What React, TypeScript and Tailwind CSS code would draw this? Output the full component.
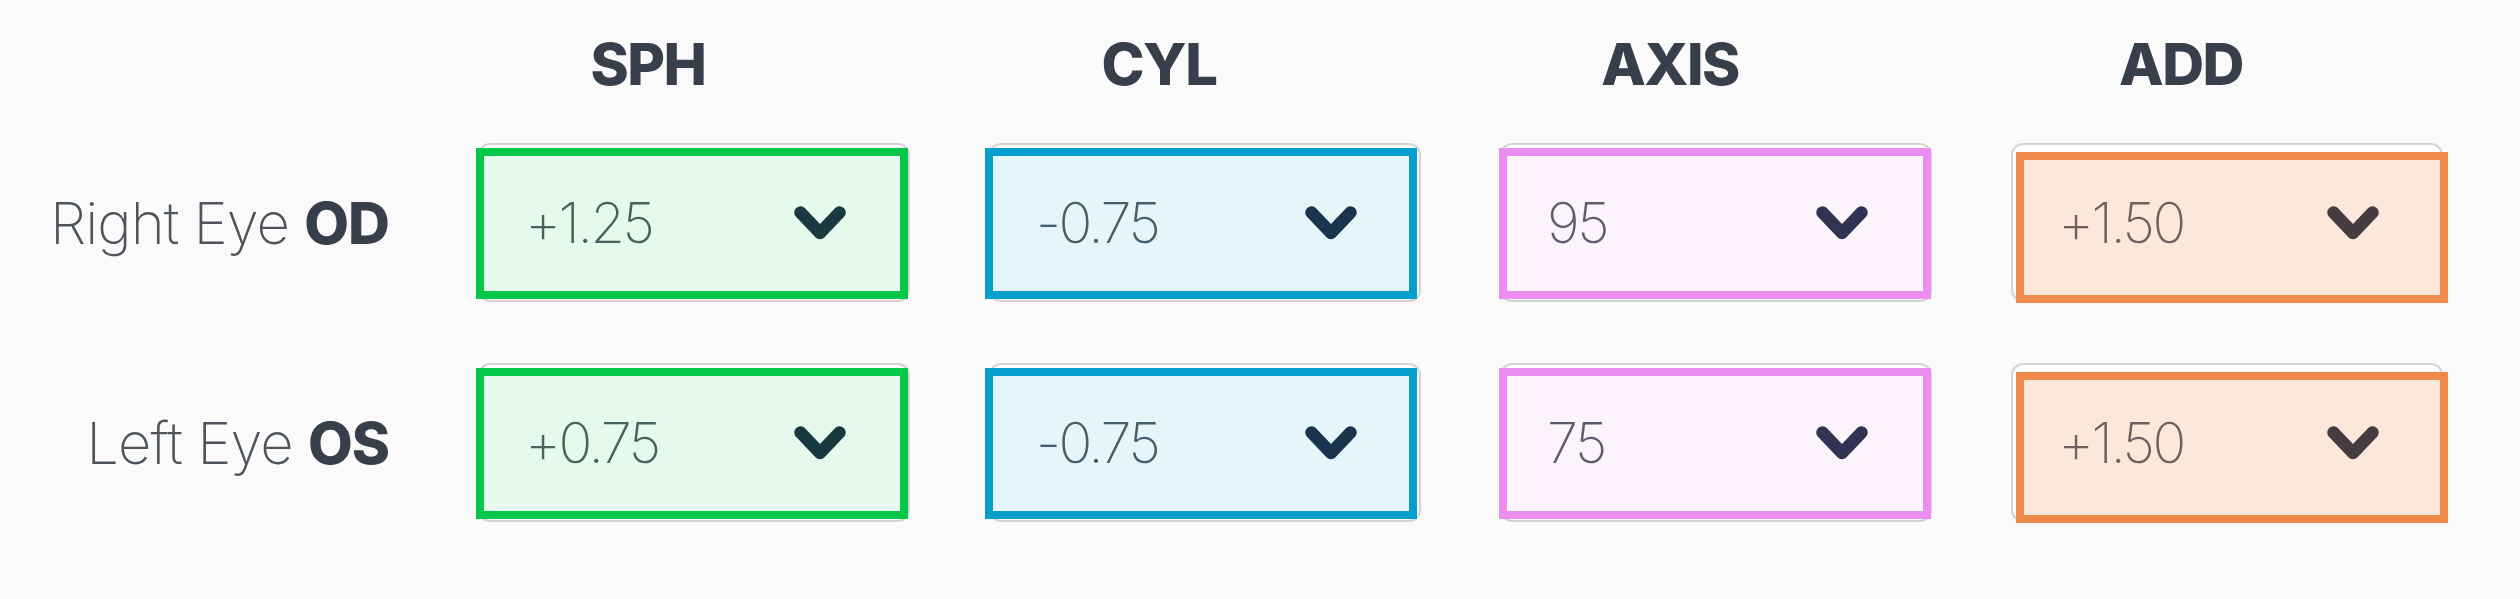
const columns = [
  { key: "sph", title: "SPH", border: "border-[#05c84a]", fill: "bg-[#05c84a1a]", pos: "-left-[2px] top-[5px]" },
  { key: "cyl", title: "CYL", border: "border-[#069ecd]", fill: "bg-[#069ecd1a]", pos: "-left-[4px] top-[5px]" },
  { key: "axis", title: "AXIS", border: "border-[#ea8ef0]", fill: "bg-[#ea8ef01a]", pos: "-left-[1px] top-[5px]" },
  { key: "add", title: "ADD", border: "border-[#f0894c]", fill: "bg-[#f0894c33]", pos: "left-[5px] top-[9px]" },
];

const rows = [
  { label: "Right Eye", code: "OD", values: ["+1.25", "-0.75", "95", "+1.50"] },
  { label: "Left Eye", code: "OS", values: ["+0.75", "-0.75", "75", "+1.50"] },
];

function Chevron() {
  return (
    <svg width="52" height="34" viewBox="0 0 52 34" fill="none">
      <path
        d="M6.5 6.5 L26 27 L45.5 6.5"
        stroke="#1b2a40"
        strokeWidth="12.5"
        strokeLinecap="round"
        strokeLinejoin="round"
      />
    </svg>
  );
}

interface SelectProps {
  value: string;
  col: (typeof columns)[number];
}

const SelectBox: React.FC<SelectProps> = ({ value, col }) => {
  return (
    <div className="relative w-[432px] h-[159px]">
      <div className="w-full h-full flex items-center justify-between bg-white border-2 border-[#d3d3d3] rounded-xl pl-[45px] pr-[62px]">
        <span className="text-[56px] leading-[58px] font-extralight text-[#4f5862] tracking-[-2.5px]">
          {value}
        </span>
        <Chevron />
      </div>
      <div
        className={`absolute w-[432px] h-[151px] border-[8px] ${col.border} ${col.fill} ${col.pos}`}
      />
    </div>
  );
};

export default function App() {
  return (
    <div className="min-h-[599px] bg-[#fafafa] font-['Inter',sans-serif]">
      <div className="grid grid-cols-[399px_432px_432px_432px_432px] gap-x-[79px] h-[143px]">
        <div />
        {columns.map((c) => (
          <div
            key={c.key}
            className="pt-[35px] pr-[92px] text-center text-[58px] leading-[58px] font-extrabold text-[#363f4a] tracking-[-1.5px]"
          >
            {c.title}
          </div>
        ))}
      </div>
      <div className="flex flex-col gap-y-[61px]">
        {rows.map((r) => (
          <div
            key={r.code}
            className="grid grid-cols-[399px_432px_432px_432px_432px] gap-x-[79px]"
          >
            <div className="flex items-center justify-end pr-[10px] text-[58px] leading-[58px] tracking-[-1px]">
              <span className="font-extralight text-[#4d545c]">{r.label}&nbsp;</span>
              <span className="font-extrabold text-[#363f4a]">{r.code}</span>
            </div>
            {r.values.map((v, i) => (
              <SelectBox key={i} value={v} col={columns[i]} />
            ))}
          </div>
        ))}
      </div>
    </div>
  );
}
